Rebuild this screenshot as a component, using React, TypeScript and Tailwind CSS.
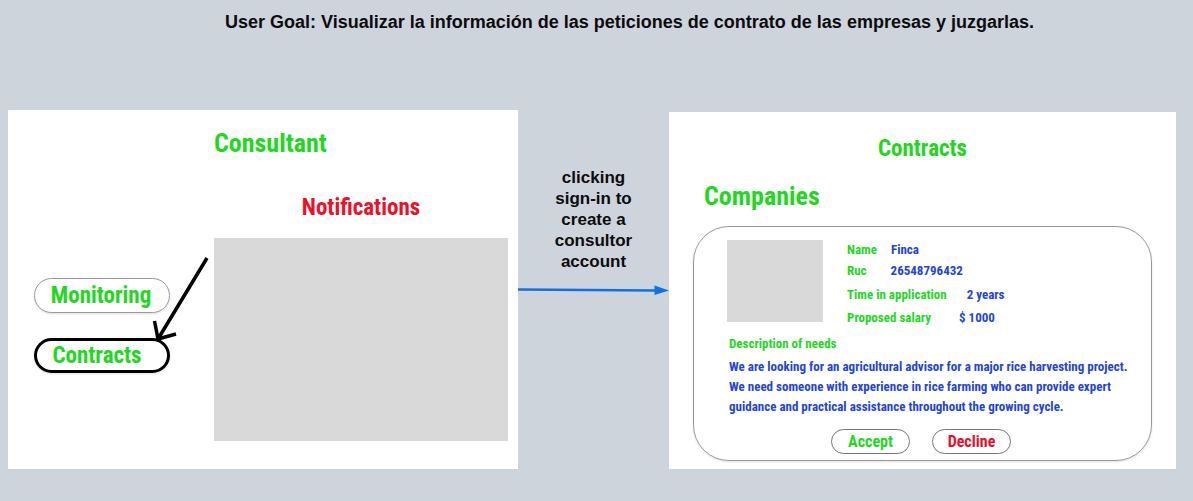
import type { ReactNode } from "react";

function Field({ label, gap, children }: { label: string; gap: string; children: ReactNode }) {
  return (
    <div className={`flex h-5 items-center ${gap}`}>
      <dt className="text-[#1fd81f]">{label}</dt>
      <dd className="text-[#1f45dc]">{children}</dd>
    </div>
  );
}

function ConsultantScreen() {
  return (
    <section className="relative grid grid-cols-[136px_1fr] gap-x-11 bg-white pt-[17px] pr-2.5 pb-7 pl-[26px]">
      <h2 className="col-start-2 text-[26px] leading-8 text-[#1fd81f]">Consultant</h2>
      <nav className="col-start-1 row-start-3 flex flex-col gap-[25px] pt-10 text-[23px] leading-none text-[#1fd81f]">
        <button type="button" className="h-[35px] w-full rounded-full border border-[#999] pr-0.5 shadow-sm">
          Monitoring
        </button>
        <button type="button" className="h-[35px] w-full rounded-full border-[3px] border-black pr-2.5 shadow-sm">
          Contracts
        </button>
      </nav>
      <h3 className="col-start-2 row-start-2 mt-[33px] mb-3.5 text-center text-[23px] leading-8 text-[#ee1029]">
        Notifications
      </h3>
      <div className="col-start-2 row-start-3 h-[203px] bg-[#d9d9d9]" />
      <svg
        className="absolute top-[144px] left-[142px]"
        width="62"
        height="92"
        viewBox="0 0 62 92"
        fill="none"
        stroke="#000"
        strokeWidth="3.5"
        aria-hidden="true"
      >
        <path d="M57 4 L8 85 M4.500 67 L8 85 L26 80" />
      </svg>
    </section>
  );
}

function Transition() {
  return (
    <div className="self-start pt-[57px]">
      <p className="mx-auto w-24 text-center font-['Liberation_Sans',sans-serif] text-[17px] leading-[21px] text-[#0c0c0c]">
        clicking
        <br />
        sign-in to
        <br />
        create a
        <br />
        consultor
        <br />
        account
      </p>
      <svg className="mt-3 w-full" viewBox="0 0 151 12" aria-hidden="true">
        <path d="M0 5.500 L138 6.500" stroke="#1071e5" strokeWidth="2.500" />
        <path d="M136.500 1.500 L151 6.600 L136.500 11 Z" fill="#1071e5" />
      </svg>
    </div>
  );
}

function ContractsScreen() {
  return (
    <section className="bg-white px-6 pt-[21px] pb-2">
      <h2 className="text-center text-[23px] leading-8 text-[#1fd81f]">Contracts</h2>
      <h3 className="mt-[15px] pl-[11px] text-[26px] leading-8 text-[#1fd81f]">Companies</h3>
      <article className="mt-3.5 rounded-[36px] border border-[#999] pt-[13px] pr-5 pb-1.5 pl-[33px] text-[13px] leading-5 shadow-sm">
        <div className="flex gap-6">
          <div className="h-[82px] w-24 bg-[#d9d9d9]" />
          <dl className="grid grid-rows-[21px_24px_23px_20px]">
            <Field label="Name" gap="gap-3.5">Finca</Field>
            <Field label="Ruc" gap="gap-6">26548796432</Field>
            <Field label="Time in application" gap="gap-5">2 years</Field>
            <Field label="Proposed salary" gap="gap-7">$ 1000</Field>
          </dl>
        </div>
        <div className="pl-0.5 whitespace-nowrap">
          <h4 className="mt-1.5 text-[#1fd81f]">Description of needs</h4>
          <p className="mt-[3px] text-[#1f45dc]">
            We are looking for an agricultural advisor for a major rice harvesting project.
            <br />
            We need someone with experience in rice farming who can provide expert
            <br />
            guidance and practical assistance throughout the growing cycle.
          </p>
        </div>
        <div className="mt-3 -ml-4 flex justify-center gap-[22px] text-base leading-none">
          <button type="button" className="h-[25px] w-[79px] rounded-full border border-[#777] text-[#1fd81f]">
            Accept
          </button>
          <button type="button" className="h-[25px] w-[79px] rounded-full border border-[#777] text-[#ee1029]">
            Decline
          </button>
        </div>
      </article>
    </section>
  );
}

export default function App() {
  return (
    <main className="min-h-screen bg-[#cdd4dc] pr-[17px] pb-8 pl-2 font-['Roboto_Condensed','Liberation_Sans_Narrow',sans-serif] font-bold">
      <h1 className="pt-3 pl-[75px] text-center font-['Liberation_Sans',sans-serif] text-[18px] leading-5 text-[#0c0c0c]">
        User Goal: Visualizar la información de las peticiones de contrato de las empresas y juzgarlas.
      </h1>
      <div className="mt-[78px] grid grid-cols-[minmax(0,510fr)_minmax(0,151fr)_minmax(0,507fr)] items-end">
        <ConsultantScreen />
        <Transition />
        <ContractsScreen />
      </div>
    </main>
  );
}
